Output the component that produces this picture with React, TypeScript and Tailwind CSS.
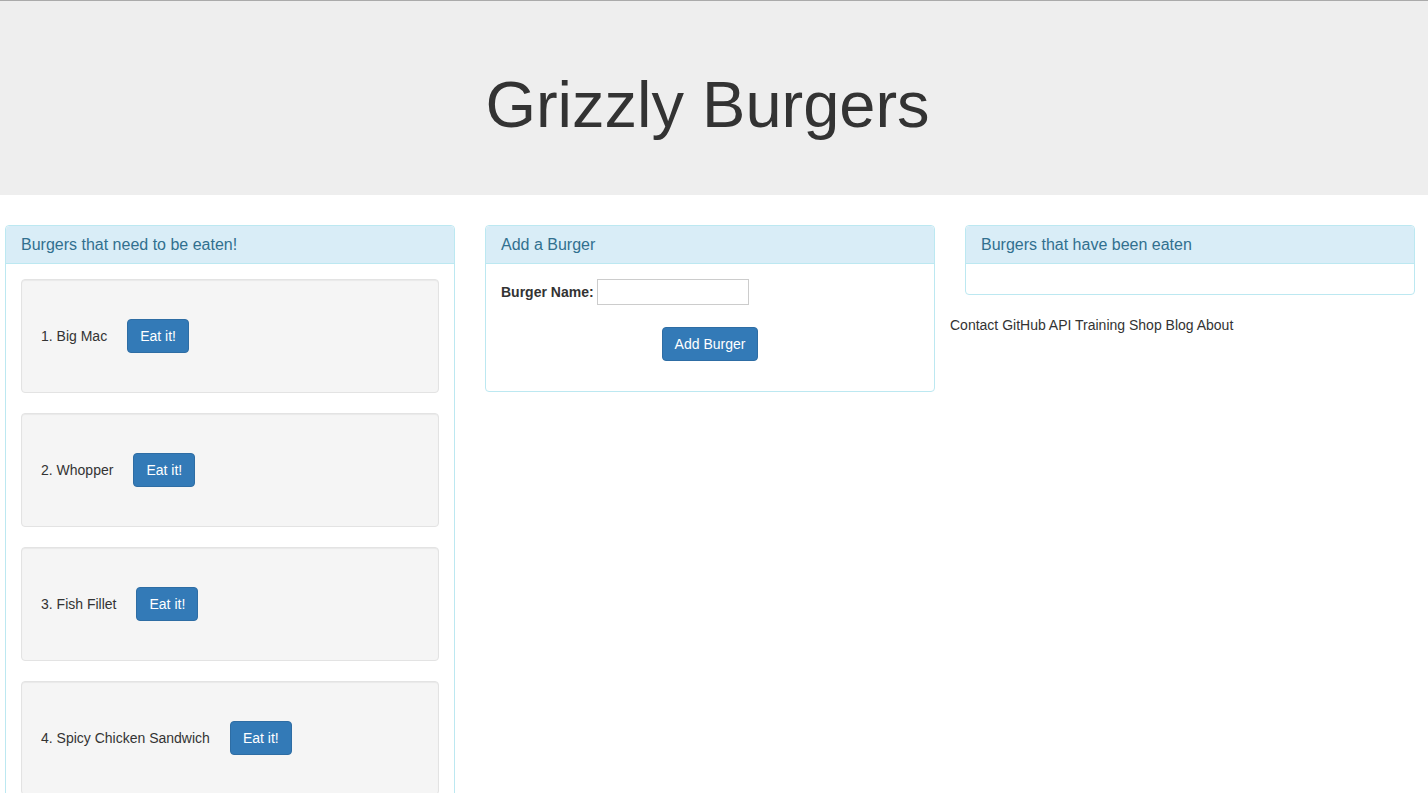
const burgers = ["Big Mac", "Whopper", "Fish Fillet", "Spicy Chicken Sandwich"];

const Panel: React.FC<{ title: string; children?: React.ReactNode }> = ({
  title,
  children,
}) => (
  <div className="rounded border border-[#bce8f1] bg-white">
    <div className="rounded-t border-b border-[#bce8f1] bg-[#d9edf7] px-[15px] py-[10px] text-[#31708f]">
      <h3 className="text-[16px] leading-[17px]">{title}</h3>
    </div>
    <div className="p-[15px]">{children}</div>
  </div>
);

export default function App() {
  return (
    <div
      className="min-h-screen bg-white text-[14px] leading-[20px] text-[#333]"
      style={{ fontFamily: '"Liberation Sans", Arial, sans-serif' }}
    >
      {/* Jumbotron */}
      <div className="border-t border-[#aaa] bg-[#eee]">
        <div className="h-[194px] w-[1410px] pl-[5px] pt-[68px] text-center">
          <h1 className="text-[65px] leading-[71.5px]">Grizzly Burgers</h1>
        </div>
      </div>

      <div className="mt-[30px] flex gap-[30px] pl-[5px]">
        {/* Burgers to eat */}
        <div className="w-[450px]">
          <Panel title="Burgers that need to be eaten!">
            {burgers.map((b, i) => (
              <div
                key={b}
                className="mb-5 flex h-[114px] items-center gap-5 rounded border border-[#e3e3e3] bg-[#f5f5f5] px-[19px] shadow-[inset_0_1px_1px_rgba(0,0,0,0.05)]"
              >
                <span>
                  {i + 1}. {b}
                </span>
                <button className="rounded border border-[#2e6da4] bg-[#337ab7] px-3 py-[6px] text-white">
                  Eat it!
                </button>
              </div>
            ))}
          </Panel>
        </div>

        {/* Add form */}
        <div className="w-[450px]">
          <Panel title="Add a Burger">
            <div className="flex h-[26px] items-center">
              <label className="font-bold">Burger Name:</label>
              <input
                type="text"
                className="ml-[3px] h-[26px] w-[152px] border border-[#ccc] bg-white px-1"
              />
            </div>
            <div className="mb-[15px] mt-[22px] flex justify-center">
              <button className="rounded border border-[#2e6da4] bg-[#337ab7] px-3 py-[6px] text-white">
                Add Burger
              </button>
            </div>
          </Panel>
        </div>

        {/* Eaten */}
        <div className="w-[450px]">
          <Panel title="Burgers that have been eaten" />
          <div className="-ml-[15px] mt-5">
            Contact GitHub API Training Shop Blog About
          </div>
        </div>
      </div>
    </div>
  );
}
